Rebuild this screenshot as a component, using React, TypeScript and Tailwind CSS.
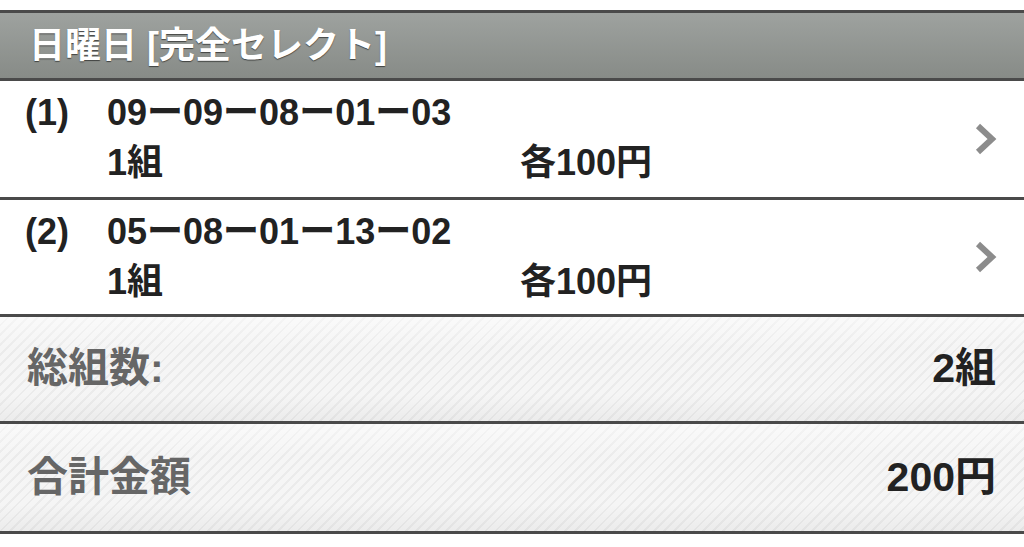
const rows = [
  { no: "(1)", nums: "09ー09ー08ー01ー03", sets: "1組", price: "各100円" },
  { no: "(2)", nums: "05ー08ー01ー13ー02", sets: "1組", price: "各100円" },
];

const summary = [
  { label: "総組数:", value: "2組", h: "h-[107px]" },
  { label: "合計金額", value: "200円", h: "h-[110px]" },
];

const Chevron = () => (
  <svg viewBox="0 0 26 34" className="w-[26px] h-[34px] shrink-0" fill="none" stroke="#8c8c8c" strokeWidth="6" strokeLinejoin="miter">
    <polyline points="5,4 19,17 5,30" />
  </svg>
);

const App = () => {
  return (
    <div className="w-[1024px] h-[547px] bg-white pt-[10px] font-['Liberation_Sans','Noto_Sans_CJK_JP',sans-serif] font-bold overflow-hidden">
      <div className="border-t-[3px] border-[#4a4a4a]">
        <div className="h-[65px] flex items-center pl-[29px] bg-linear-to-b from-[#9ea29f] to-[#878b87] text-white text-[36px] [text-shadow:0_1px_1px_rgba(0,0,0,0.55)]">
          日曜日 [完全セレクト]
        </div>
      </div>

      {rows.map((r, i) => (
        <div
          key={r.no}
          className={`border-t-[3px] border-[#4a4a4a] flex items-center pl-[25px] pr-[25px] text-[#222] text-[36px] leading-[50px] ${i === 0 ? "h-[119px]" : "h-[117px]"}`}
        >
          <div className="w-[82px] self-start pt-[7px]">{r.no}</div>
          <div className="flex-1 self-start pt-[7px]">
            <div>{r.nums}</div>
            <div className="flex">
              <div className="w-[413px]">{r.sets}</div>
              <div>{r.price}</div>
            </div>
          </div>
          <Chevron />
        </div>
      ))}

      {summary.map((s) => (
        <div
          key={s.label}
          className={`border-t-[3px] border-[#4a4a4a] flex items-center justify-between pl-[27px] pr-[28px] text-[41px] ${s.h} bg-[linear-gradient(to_bottom,rgba(255,255,255,0.5),rgba(255,255,255,0)_30%,rgba(0,0,0,0)_75%,rgba(0,0,0,0.04)),repeating-linear-gradient(135deg,#f5f5f5_0px,#f5f5f5_5px,#ebebeb_5px,#ebebeb_7px)]`}
        >
          <span className="text-[#666]">{s.label}</span>
          <span className="text-[#222]">{s.value}</span>
        </div>
      ))}
      <div className="border-t-[3px] border-[#4a4a4a]" />
    </div>
  );
};

export default App;
